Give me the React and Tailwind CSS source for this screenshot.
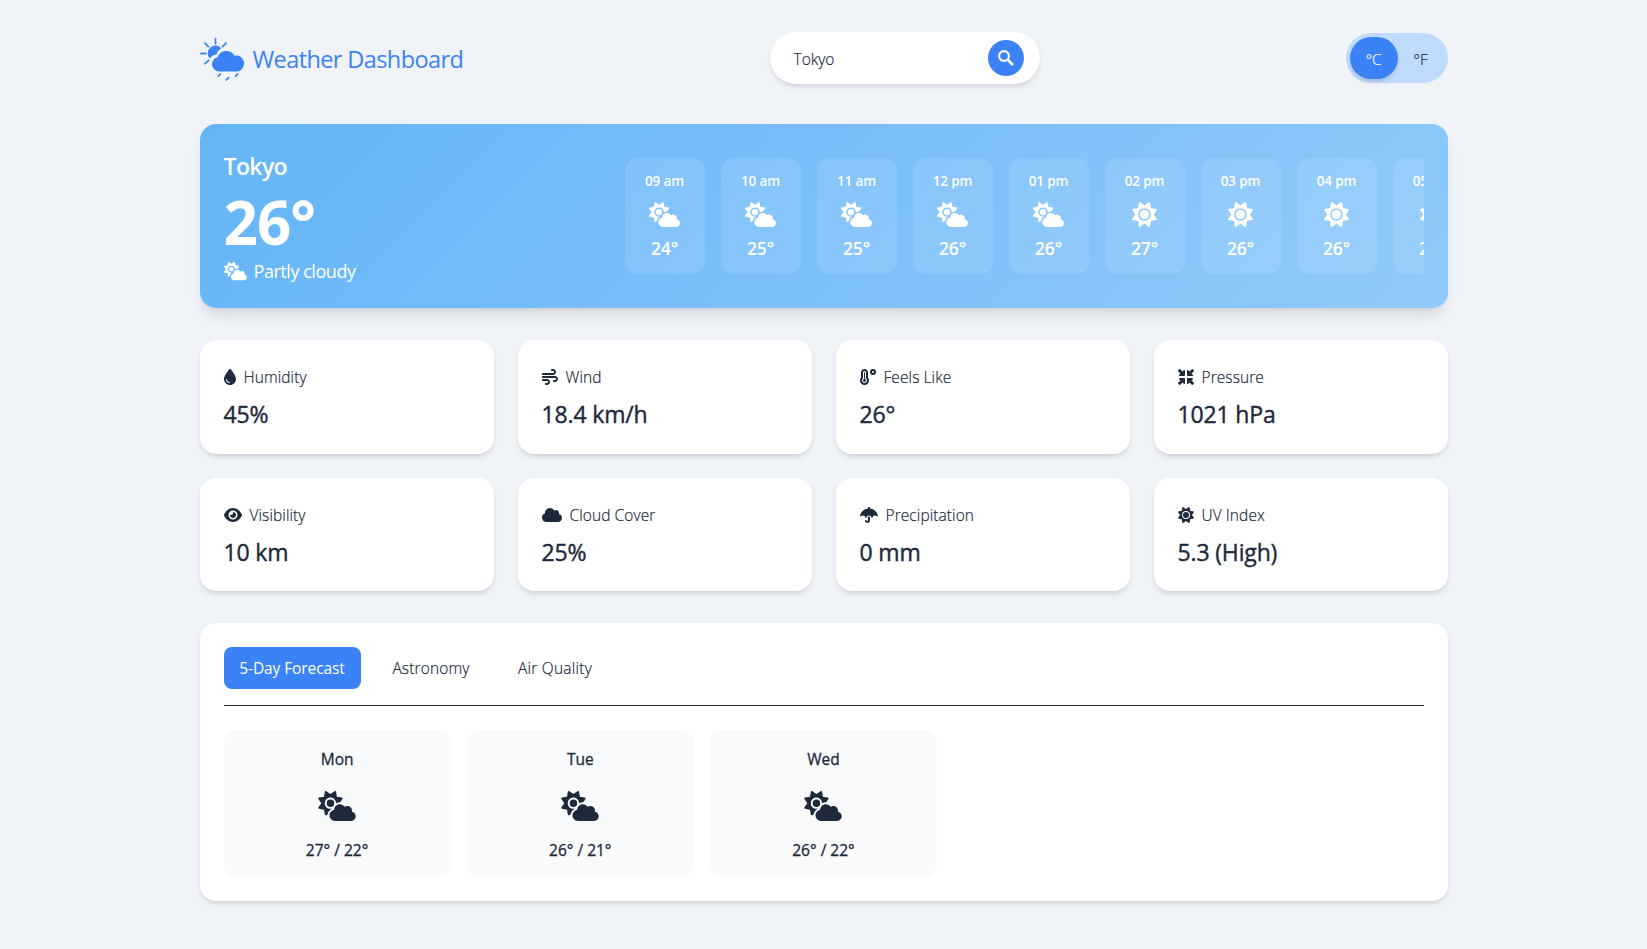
import React from "react";
import { FaDroplet, FaWind, FaTemperatureHigh, FaMinimize, FaEye, FaCloud, FaUmbrella, FaSun, FaCloudSun } from "react-icons/fa6";

function Logo() {
  return (
    <svg viewBox="0 0 46 44" className="mt-[3px] h-11 w-[46px] shrink-0" fill="none" stroke="#3b82f6" strokeWidth="1.8" strokeLinecap="round">
      <path d="M15.500 1v4.700M5 5.200l3.400 3.400M26 5.200l-3.400 3.400M1 15.500h4.800M8.600 22.300l-3.600 3.400" />
      <path d="M20.300 36.200l-2 2M28.600 39.600l-2.300 2.300M37.600 36.200l-2 2" />
      <path d="M9.700 20.500A7.400 7.400 0 1 1 21.300 10.200a10.500 10.500 0 0 0-5 6.300 9 9 0 0 0-6.600 4z" fill="#3b82f6" stroke="none" />
      <path d="M19 33.500a7.200 7.200 0 0 1-1.500-14.200A9.400 9.400 0 0 1 34.600 17.700 8 8 0 1 1 37 33.500z" fill="#3b82f6" stroke="none" />
    </svg>
  );
}

function SearchIcon() {
  return (
    <svg viewBox="0 0 16 16" className="size-4" fill="none" stroke="currentColor">
      <circle cx="6" cy="6" r="4.900" strokeWidth="2.100" />
      <path d="M9.700 9.700l5.300 5.300" strokeWidth="2.600" />
    </svg>
  );
}

const hours = [
  ["09 am", "24°", 0], ["10 am", "25°", 0], ["11 am", "25°", 0], ["12 pm", "26°", 0], ["01 pm", "26°", 0],
  ["02 pm", "27°", 1], ["03 pm", "26°", 1], ["04 pm", "26°", 1], ["05 pm", "25°", 1],
];

const stats = [
  [FaDroplet, "w-3", "Humidity", "45%"],
  [FaWind, "w-4", "Wind", "18.4 km/h"],
  [FaTemperatureHigh, "w-4", "Feels Like", "26°"],
  [FaMinimize, "w-4", "Pressure", "1021 hPa"],
  [FaEye, "w-[18px]", "Visibility", "10 km"],
  [FaCloud, "w-5", "Cloud Cover", "25%"],
  [FaUmbrella, "w-[18px]", "Precipitation", "0 mm"],
  [FaSun, "w-4", "UV Index", "5.3 (High)"],
];

const days = [["Mon", "27° / 22°"], ["Tue", "26° / 21°"], ["Wed", "26° / 22°"]];

export default function App() {
  return (
    <div className="min-h-[949px] bg-[#f0f4f9] font-['Open_Sans','Noto_Sans',sans-serif] text-[#1e293b]">
      <div className="mx-auto w-[1280px] px-4 pt-8">
        <header className="flex h-[52px] items-center justify-between">
          <h1 className="flex w-[264px] items-center gap-[7px] whitespace-nowrap text-[23.5px] tracking-[-0.6px] text-[#3b82f6]">
            <Logo />
            <span className="pt-[3px]">Weather Dashboard</span>
          </h1>
          <div className="flex h-[52px] w-[270px] items-center justify-between rounded-full bg-white pl-6 pr-4 shadow-md">
            <span className="pt-1 text-[15.5px] font-light [-webkit-text-stroke:0.2px]">Tokyo</span>
            <button className="flex size-9 items-center justify-center rounded-full bg-[#3b82f6] text-white">
              <SearchIcon />
            </button>
          </div>
          <div className="flex h-[50px] w-[102px] items-center rounded-full bg-[#bfdbfe] p-1 text-[15px] font-light [-webkit-text-stroke:0.2px]">
            <span className="flex h-[42px] w-12 items-center justify-center rounded-full bg-[#3b82f6] pt-0.5 text-white shadow-md">°C</span>
            <span className="flex flex-1 items-center justify-center pt-0.5">°F</span>
          </div>
        </header>

        <section className="mt-10 flex h-[184px] items-center justify-between rounded-2xl bg-[linear-gradient(135deg,#64b5f6,#7abffa_50%,#90caf9)] px-6 text-white shadow-lg">
          <div className="w-[300px] pb-1">
            <h2 className="pt-1 text-[23px] font-semibold leading-8 tracking-[-0.6px]">Tokyo</h2>
            <p className="pb-[5px] pt-2 text-[60px] font-bold leading-[64px] tracking-[-0.9px]">26°</p>
            <p className="flex items-center gap-[7px] text-lg leading-6 tracking-[-0.45px]">
              <FaCloudSun className="h-5 w-[23px]" />
              Partly cloudy
            </p>
          </div>
          <div className="flex w-[799px] gap-4 overflow-hidden">
            {hours.map(([time, temp, sunny]) => (
              <div key={time} className="flex h-[116px] w-20 shrink-0 flex-col items-center rounded-xl bg-white/10 pt-3">
                <span className="text-[13.5px] font-semibold leading-[22px] tracking-[-0.15px]">{time}</span>
                {sunny ? <FaSun className="mt-2.5 size-[25px]" /> : <FaCloudSun className="mt-2.5 h-[25px] w-[31px]" />}
                <span className="mt-[7px] text-[17.5px] font-semibold leading-7 tracking-[-0.2px]">{temp}</span>
              </div>
            ))}
          </div>
        </section>

        <section className="mt-8 grid grid-cols-4 gap-6">
          {stats.map(([Icon, width, label, value]) => (
            <div key={label} className="h-[113.5px] rounded-2xl bg-white px-6 pt-6 shadow-md">
              <div className="flex h-[26px] items-center gap-2">
                <Icon className={`h-4 ${width}`} />
                <span className="pt-0.5 text-[15.5px] font-light tracking-[0.08px] [-webkit-text-stroke:0.2px]">{label}</span>
              </div>
              <p className="mt-2 text-[23px] leading-8 tracking-[-0.15px] [-webkit-text-stroke:0.4px]">{value}</p>
            </div>
          ))}
        </section>

        <section className="mt-8 h-[278px] rounded-2xl bg-white p-6 shadow-md">
          <nav className="flex h-[59px] items-start gap-4 border-b border-[#1e293b] text-[15.5px]">
            <button className="h-[42px] w-[137px] rounded-lg bg-[#3b82f6] pt-0.5 tracking-[-0.1px] text-white">5-Day Forecast</button>
            <button className="h-[42px] w-[109px] rounded-lg pt-0.5 font-light tracking-[0.15px] [-webkit-text-stroke:0.2px]">Astronomy</button>
            <button className="h-[42px] w-[107px] rounded-lg pt-0.5 font-light tracking-[0.25px] [-webkit-text-stroke:0.2px]">Air Quality</button>
          </nav>
          <div className="mt-6 grid grid-cols-5 gap-4">
            {days.map(([day, temps]) => (
              <div key={day} className="flex h-[147px] flex-col items-center rounded-xl bg-[#f8fafc] pt-[15px] [-webkit-text-stroke:0.3px]">
                <span className="text-[15.5px] leading-7">{day}</span>
                <FaCloudSun className="mb-[15px] mt-[18px] h-[30px] w-[38px]" />
                <span className="text-[15.5px] leading-7">{temps}</span>
              </div>
            ))}
          </div>
        </section>
      </div>
    </div>
  );
}
